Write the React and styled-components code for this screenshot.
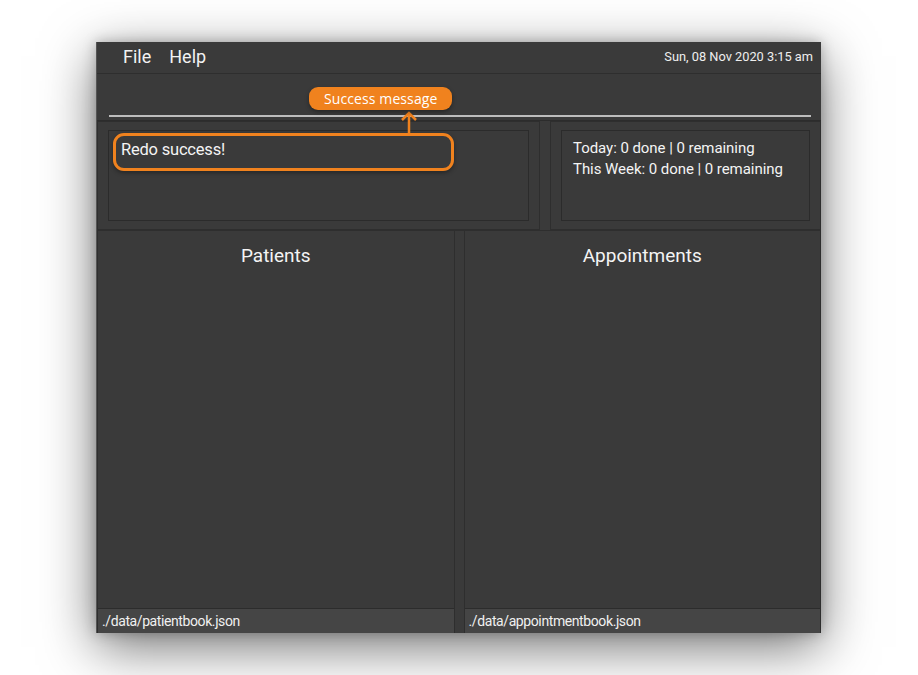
import React from 'react';
import styled, { createGlobalStyle } from 'styled-components';

const GlobalStyle = createGlobalStyle`
  html, body {
    margin: 0;
    padding: 0;
    background: #ffffff;
  }
  body {
    font-family: Roboto, "Liberation Sans", sans-serif;
  }
`;

const Page = styled.div`
  width: 918px;
  height: 675px;
  padding: 42px 97px 0 96px;
  box-sizing: border-box;
`;

const Window = styled.div`
  position: relative;
  width: 725px;
  height: 591px;
  background: #3a3a3a;
  display: flex;
  flex-direction: column;
  box-shadow: 0 14px 50px rgba(0, 0, 0, 0.55), 0 0 12px rgba(0, 0, 0, 0.25);
  border-left: 1px solid #555;
  box-sizing: border-box;
`;

const MenuBar = styled.div`
  height: 32px;
  display: flex;
  align-items: center;
  padding: 0 8px 3px 26px;
  box-sizing: border-box;
  border-bottom: 1px solid #2e2e2e;
  color: #f2f2f2;
`;

const MenuItem = styled.span`
  font-size: 18px;
  margin-right: 18px;
`;

const Clock = styled.span`
  margin-left: auto;
  font-size: 12.8px;
  color: #eeeeee;
`;

const CommandArea = styled.div`
  height: 46px;
  padding: 0 10px 0 12px;
  display: flex;
  align-items: flex-end;
  border-bottom: 1px solid #2c2c2c;
`;

const CommandLine = styled.div`
  flex: 1;
  height: 2px;
  background: #bdbdbd;
  margin-bottom: 3px;
`;

const Row = styled.div`
  display: flex;
  gap: 10px;
  height: ${(p) => p.$height}px;
`;

const Pane = styled.div`
  width: ${(p) => p.$width}px;
  flex: ${(p) => (p.$width ? 'none' : 1)};
  border: 1px solid #2e2e2e;
  box-sizing: border-box;
  padding: 8px 10px;
  display: flex;
`;

const InnerBox = styled.div`
  flex: 1;
  border: 1px solid #2b2b2b;
  box-sizing: border-box;
  padding: 7px 11px;
  color: #f4f4f4;
`;

const ResultText = styled.div`
  font-size: 16.5px;
  padding-top: 2px;
  margin-left: 1px;
  letter-spacing: -0.2px;
`;

const StatLine = styled.div`
  font-size: 15px;
  line-height: 21px;
  letter-spacing: -0.05px;
`;

const ListsRow = styled.div`
  flex: 1;
  display: flex;
  gap: 9px;
  border-top: 1px solid #2e2e2e;
`;

const ListPanel = styled.div`
  flex: 1;
  display: flex;
  flex-direction: column;
  border-left: 1px solid #2e2e2e;
  border-right: 1px solid #2e2e2e;
`;

const ListTitle = styled.div`
  text-align: center;
  font-size: 19px;
  color: #f4f4f4;
  padding-top: 13px;
  flex: 1;
`;

const StatusBar = styled.div`
  height: 24px;
  background: #454545;
  border-top: 1px solid #2c2c2c;
  color: #f0f0f0;
  font-size: 14px;
  letter-spacing: -0.4px;
  display: flex;
  align-items: center;
  padding-left: 4px;
`;

const Callout = styled.div`
  position: absolute;
  left: 212px;
  top: 45px;
  height: 23px;
  padding: 0 15px 0 15px;
  border-radius: 9px;
  background: #f0821e;
  color: #ffffff;
  font-family: "Open Sans", "Noto Sans", sans-serif;
  font-size: 14px;
  letter-spacing: 0.1px;
  display: flex;
  align-items: center;
  box-shadow: 0 2px 4px rgba(0, 0, 0, 0.35);
`;

const Highlight = styled.div`
  position: absolute;
  left: 16px;
  top: 91px;
  width: 341px;
  height: 38px;
  border: 3px solid #f0821e;
  border-radius: 11px;
  box-sizing: border-box;
  box-shadow: 0 2px 4px rgba(0, 0, 0, 0.35);
`;

const Arrow = styled.svg`
  position: absolute;
  left: 302px;
  top: 68px;
`;

export default function App() {
  return (
    <>
      <GlobalStyle />
      <Page>
        <Window>
          <MenuBar>
            <MenuItem>File</MenuItem>
            <MenuItem>Help</MenuItem>
            <Clock>Sun, 08 Nov 2020 3:15 am</Clock>
          </MenuBar>
          <CommandArea>
            <CommandLine />
          </CommandArea>
          <Row $height={109}>
            <Pane $width={443}>
              <InnerBox>
                <ResultText>Redo success!</ResultText>
              </InnerBox>
            </Pane>
            <Pane>
              <InnerBox>
                <StatLine>Today: 0 done | 0 remaining</StatLine>
                <StatLine>This Week: 0 done | 0 remaining</StatLine>
              </InnerBox>
            </Pane>
          </Row>
          <ListsRow>
            <ListPanel>
              <ListTitle>Patients</ListTitle>
              <StatusBar>./data/patientbook.json</StatusBar>
            </ListPanel>
            <ListPanel>
              <ListTitle>Appointments</ListTitle>
              <StatusBar>./data/appointmentbook.json</StatusBar>
            </ListPanel>
          </ListsRow>
          <Highlight />
          <Arrow width="20" height="25" viewBox="0 0 20 25">
            <path d="M10 24 V3 M3 10 L10 3 L17 10" stroke="#f0821e" strokeWidth="2.5" fill="none" />
          </Arrow>
          <Callout>Success message</Callout>
        </Window>
      </Page>
    </>
  );
}
